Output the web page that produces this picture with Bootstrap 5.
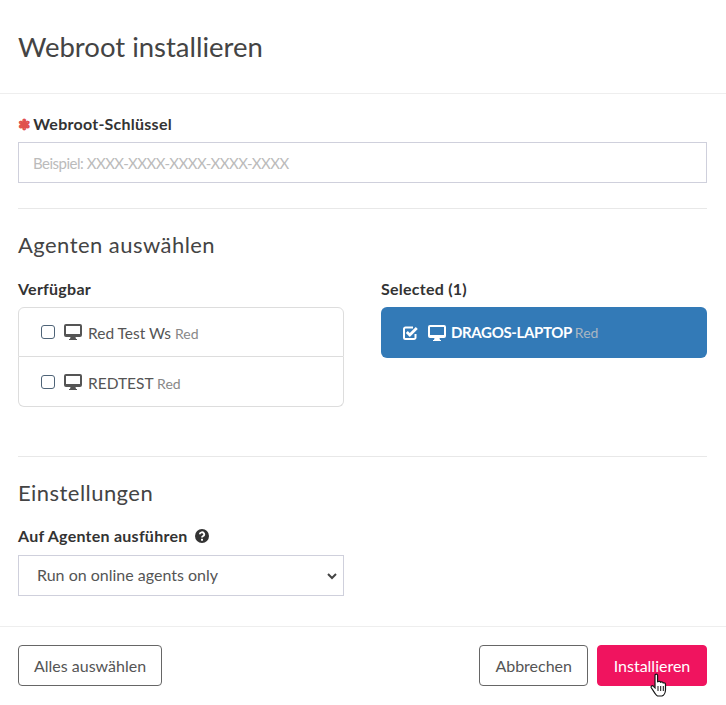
<!DOCTYPE html>
<html lang="de">
<head>
<meta charset="UTF-8">
<title>Webroot installieren</title>
<link href="https://cdn.jsdelivr.net/npm/bootstrap@5.3.0/dist/css/bootstrap.min.css" rel="stylesheet">
<style>
body { font-family: "Lato", "Liberation Sans", sans-serif; color: #555; background: #fff; overflow: hidden; }
.dlg-head { height: 94px; padding: 0 19px 0 18px; border-bottom: 1px solid #eee; }
.dlg-head h1 { font-size: 27.5px; font-weight: 400; color: #444; margin: 0; }
.dlg-body { height: 533px; padding: 20px 19px 0 18px; border-bottom: 1px solid #eee; }
.dlg-foot { padding: 18px 19px 18px 18px; }
.fld-label { font-size: 16px; font-weight: 700; color: #333; line-height: 20px; margin-bottom: 8px; letter-spacing: .25px; }
.key-label { gap: 2px; }
.req-star { color: #e0504f; font-size: 15px; }
.key-input, .run-select { height: 41px; border: 1px solid #cfd0dc; border-radius: 0; font-size: 16px; color: #555; }
.key-input { padding: 0 14px; }
.key-input::placeholder { color: #bbb; font-size: 15px; letter-spacing: -.5px; }
.run-select { width: 326px; padding: 0 30px 2px 18px; background-position: right 6px center; background-size: 10px 8px; background-image: url("data:image/svg+xml,%3csvg xmlns='http://www.w3.org/2000/svg' viewBox='0 0 10 8'%3e%3cpath fill='none' stroke='%23444' stroke-width='2' d='M1 2l4 4 4-4'/%3e%3c/svg%3e"); }
.sep { margin: 25px 0 0; border-color: #e8e8e8; opacity: 1; }
.sep-wide { margin-top: 49px; }
.sect-title { font-size: 22px; font-weight: 400; color: #444; line-height: 28px; letter-spacing: .45px; }
.title-agents { margin-top: 22px; }
.title-settings { margin-top: 22px; }
.pick-cols { margin-top: 20px; }
.col-agent { width: 326px; flex: none; padding: 0; }
.label-run { margin-top: 19px; margin-bottom: 9px; }
.agent-row { height: 50px; padding: 0 22px; font-size: 15.5px; color: #555; border-color: #ddd; gap: 9px; }
.agent-list { border-radius: 6px; }
.agent-row .form-check-input { width: 14px; height: 14px; margin: 0; border: 1px solid #4f6478; border-radius: 3px; }
.agent-name { margin-left: -3px; padding-top: 4px; }
.group-tag { font-size: 14px; color: #888; letter-spacing: 0; }
.picked-row { height: 51px; background: #337ab7; color: #fff; border-radius: 6px; padding: 0 22px; font-size: 15px; font-weight: 700; letter-spacing: -.35px; gap: 9px; }
.picked-row .group-tag { color: #a9b6c2; font-weight: 400; }
.picked-row .agent-name { margin-left: -4px; padding-top: 0; }
.btn-plain { height: 41px; border: 1px solid #666; color: #555; font-size: 16px; padding: 0 15px; border-radius: 4px; background: #fff; }
.foot-right { gap: 9px; }
.btn-install { height: 41px; width: 110px; background: #f0145f; border: 1px solid #f0145f; color: #fff; font-size: 16px; padding: 0; border-radius: 4px; }
.btn-install:hover { background: #f0145f; color: #fff; }
.cursor-hand { position: absolute; left: 52px; top: 27px; }
</style>
</head>
<body>
<div class="dlg-head d-flex align-items-center">
  <h1>Webroot installieren</h1>
</div>
<div class="dlg-body">
  <div class="fld-label key-label d-flex align-items-center"><span class="req-star">&#10051;</span> Webroot-Schlüssel</div>
  <input class="form-control key-input" placeholder="Beispiel: XXXX-XXXX-XXXX-XXXX-XXXX">
  <hr class="sep">
  <div class="sect-title title-agents">Agenten auswählen</div>
  <div class="row pick-cols gx-0 justify-content-between">
    <div class="col-agent">
      <div class="fld-label">Verfügbar</div>
      <div class="list-group agent-list">
        <div class="list-group-item agent-row d-flex align-items-center">
          <input class="form-check-input" type="checkbox">
          <svg width="18" height="16" viewBox="0 0 18 16"><path fill="#555" fill-rule="evenodd" d="M2 0h14a2 2 0 0 1 2 2v9a2 2 0 0 1-2 2h-4.500l.5 2h1v1H5v-1h1l.5-2H2a2 2 0 0 1-2-2V2a2 2 0 0 1 2-2zm0 2v8h14V2z"/></svg>
          <span class="agent-name">Red Test Ws <span class="group-tag">Red</span></span>
        </div>
        <div class="list-group-item agent-row d-flex align-items-center">
          <input class="form-check-input" type="checkbox">
          <svg width="18" height="16" viewBox="0 0 18 16"><path fill="#555" fill-rule="evenodd" d="M2 0h14a2 2 0 0 1 2 2v9a2 2 0 0 1-2 2h-4.500l.5 2h1v1H5v-1h1l.5-2H2a2 2 0 0 1-2-2V2a2 2 0 0 1 2-2zm0 2v8h14V2z"/></svg>
          <span class="agent-name">REDTEST <span class="group-tag">Red</span></span>
        </div>
      </div>
    </div>
    <div class="col-agent">
      <div class="fld-label">Selected (1)</div>
      <div class="picked-row d-flex align-items-center">
        <svg width="16" height="14" viewBox="0 0 16 14"><path fill="none" stroke="#fff" stroke-width="2" d="M12.500 8v3.500a1.500 1.500 0 0 1-1.500 1.500H2.500A1.500 1.500 0 0 1 1 11.500V3a1.500 1.500 0 0 1 1.500-1.500H10"/><path fill="none" stroke="#fff" stroke-width="2.800" d="M3.800 6l3 3 7-7"/></svg>
        <svg width="18" height="16" viewBox="0 0 18 16"><path fill="#fff" fill-rule="evenodd" d="M2 0h14a2 2 0 0 1 2 2v9a2 2 0 0 1-2 2h-4.500l.5 2h1v1H5v-1h1l.5-2H2a2 2 0 0 1-2-2V2a2 2 0 0 1 2-2zm0 2v8h14V2z"/></svg>
        <span class="agent-name">DRAGOS-LAPTOP <span class="group-tag">Red</span></span>
      </div>
    </div>
  </div>
  <hr class="sep sep-wide">
  <div class="sect-title title-settings">Einstellungen</div>
  <div class="fld-label label-run d-flex align-items-center gap-2">Auf Agenten ausführen
    <svg width="14" height="14" viewBox="0 0 14 14"><circle cx="7" cy="7" r="7" fill="#333"/><path fill="none" stroke="#fff" stroke-width="1.800" d="M4.800 5.300a2.200 2 0 1 1 3.300 1.700c-.8.500-1.100.8-1.100 1.600"/><rect x="6" y="9.800" width="2" height="1.900" fill="#fff"/></svg>
  </div>
  <select class="form-select run-select"><option>Run on online agents only</option></select>
</div>
<div class="dlg-foot d-flex justify-content-between">
  <button class="btn btn-plain">Alles auswählen</button>
  <div class="d-flex foot-right">
    <button class="btn btn-plain">Abbrechen</button>
    <button class="btn btn-install position-relative">Installieren
      <svg class="cursor-hand" width="18" height="24" viewBox="0 0 18 24"><path fill="#fff" stroke="#111" stroke-width="1.200" d="M5 2.200c0-1.500 2.600-1.500 2.600 0v6.500c1.500-.6 2.800-.3 3 .5 1.200-.5 2.300-.2 2.500.7 1.300-.3 2.400.2 2.400 1.500v5c0 3-1.700 6-3.500 6.600H7.500c-1.500-.5-2-2-3-3.300L1.300 14.800c-.8-1.400 1-2.800 2.200-1.500l1.500 1.500z"/><path fill="none" stroke="#111" d="M8 13v5M10.700 13v5M13.300 13v5"/></svg>
    </button>
  </div>
</div>
</body>
</html>
